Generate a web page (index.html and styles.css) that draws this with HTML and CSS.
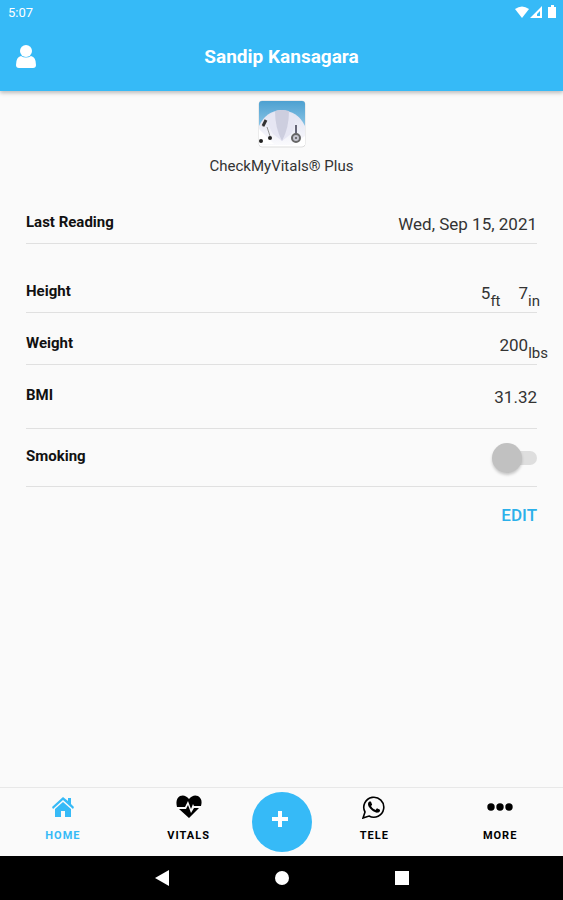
FILE: index.html
```html
<!DOCTYPE html>
<html lang="en">
<head>
    <meta charset="UTF-8">
    <meta name="viewport" content="width=device-width, initial-scale=1.0">
    <title>CheckMyVitals Plus</title>
    <link rel="stylesheet" href="styles.css">
</head>
<body>
    <header class="header">
        <div class="status-bar">
            <span>5:07</span>
            <svg class="status-icons" viewBox="0 0 42 14" width="42" height="14" fill="#fff">
                <path d="M0 4Q7-1 14 4L7 13Z"/>
                <path fill-rule="evenodd" d="M15 13L27 1V13ZM22 11H25V6L22 9Z"/>
                <path d="M36 0h3v2h2v11h-8V2h3z"/>
            </svg>
        </div>
        <div class="toolbar">
            <button class="profile-button" aria-label="Profile">
                <svg viewBox="0 0 20 24" width="20" height="24" fill="#fff">
                    <circle cx="10" cy="6" r="6"/>
                    <path d="M5 11Q10 14 15 11Q20 12 20 20Q20 23 17 23H3Q0 23 0 20Q0 12 5 11Z"/>
                </svg>
            </button>
            <h1>Sandip Kansagara</h1>
        </div>
    </header>

    <main class="content">
        <div class="brand">
            <svg class="logo" viewBox="0 0 48 48" width="48" height="48">
                <defs>
                    <linearGradient id="sky" x1="0" y1="0" x2="0" y2="1">
                        <stop offset="0" stop-color="#4a9fd0"/>
                        <stop offset="1" stop-color="#8cc5e6"/>
                    </linearGradient>
                    <linearGradient id="coat" x1="0" y1="0" x2="0" y2="1">
                        <stop offset="0" stop-color="#dfe1f0"/>
                        <stop offset="1" stop-color="#fafafd"/>
                    </linearGradient>
                    <clipPath id="frame"><rect x="1" y="1" width="46" height="46" rx="3"/></clipPath>
                </defs>
                <rect x="1" y="1" width="46" height="46" rx="3" fill="#fff" stroke="#ddd"/>
                <g clip-path="url(#frame)">
                    <rect width="48" height="27" fill="url(#sky)"/>
                    <path d="M1 26Q8 11 23 10Q40 11 47 26V45H1Z" fill="url(#coat)"/>
                    <path d="M13 14Q8 23 15 34L24 41L33 34Q40 23 34 14Q24 7 13 14Z" fill="#e6e6f3"/>
                    <path d="M17 11Q17 28 24 41Q31 28 31 11Q24 9 17 11Z" fill="#cdcedf"/>
                    <path d="M1 29L16 44H1ZM47 36L34 45H47Z" fill="#fff"/>
                    <path d="M7 21L5 27M9 27L12 36" stroke="#999" fill="none"/>
                    <path d="M8 20L5 26" stroke="#333" stroke-width="3"/>
                    <circle cx="3" cy="41" r="2" fill="#222"/>
                    <circle cx="12" cy="38" r="2" fill="#222"/>
                    <path d="M38 25V36" stroke="#667" stroke-width="2"/>
                    <circle cx="38" cy="38" r="4" fill="#c5c5cf" stroke="#666" stroke-width="2"/>
                    <circle cx="38" cy="38" r="1" fill="#555"/>
                </g>
            </svg>
            <p>CheckMyVitals® Plus</p>
        </div>

        <dl class="readings">
            <div class="row row-date">
                <dt>Last Reading</dt>
                <dd>Wed, Sep 15, 2021</dd>
            </div>
            <div class="row">
                <dt>Height</dt>
                <dd class="height-value"><span>5<sub>ft</sub></span><span>7<sub>in</sub></span></dd>
            </div>
            <div class="row">
                <dt>Weight</dt>
                <dd class="weight-value">200<sub>lbs</sub></dd>
            </div>
            <div class="row row-bmi">
                <dt>BMI</dt>
                <dd>31.32</dd>
            </div>
            <div class="row row-smoking">
                <dt><label for="smoking">Smoking</label></dt>
                <dd><input class="toggle" type="checkbox" id="smoking"></dd>
            </div>
        </dl>
        <div class="actions">
            <button class="edit-button">EDIT</button>
        </div>
    </main>

    <nav class="tabs">
        <a class="tab active" href="#home">
            <svg viewBox="0 0 24 24" width="24" height="24" fill="currentColor">
                <path d="M12 2L1 12L2 14L12 5L22 14L23 12L20 9V3H17V6Z"/>
                <path d="M12 7L4 14V22H10V16H14V22H20V14Z"/>
            </svg>
            HOME
        </a>
        <a class="tab" href="#vitals">
            <svg viewBox="0 0 26 24" width="26" height="24">
                <path d="M13 4Q17-1 22 1Q27 4 25 11H18L17 9L15 14L12 6L9 12H1Q-1 4 4 1Q9-1 13 4Z"/>
                <path d="M3 14H10L12 10L15 18L18 13H23L13 23Z"/>
            </svg>
            VITALS
        </a>
        <button class="add-button" aria-label="Add">
            <svg viewBox="0 0 18 18" width="18" height="18" fill="#fff">
                <path d="M7 1h4v6h6v4h-6v6H7v-6H1V7h6z"/>
            </svg>
        </button>
        <a class="tab" href="#tele">
            <svg viewBox="0 0 24 24" width="24" height="24">
                <path d="M17.47 14.38c-.3-.15-1.76-.87-2.03-.97-.27-.1-.47-.15-.67.15-.2.3-.77.97-.94 1.17-.17.2-.35.22-.65.07-.3-.15-1.25-.46-2.39-1.47-.88-.79-1.48-1.76-1.65-2.06-.17-.3-.02-.46.13-.61.13-.13.3-.35.45-.52.15-.17.2-.3.3-.5.1-.2.05-.37-.03-.52-.07-.15-.67-1.61-.91-2.21-.24-.58-.49-.5-.67-.51h-.57c-.2 0-.52.07-.79.37-.27.3-1.04 1.02-1.04 2.48s1.07 2.88 1.21 3.07c.15.2 2.1 3.2 5.08 4.49 2.98 1.28 2.98.86 3.52.8.54-.05 1.76-.72 2.01-1.41.25-.7.25-1.29.17-1.41-.07-.12-.27-.2-.57-.35z"/>
                <path d="M1 23L3 17A10 10 0 1 1 7 21Z" fill="none" stroke="#000" stroke-width="1.600"/>
            </svg>
            TELE
        </a>
        <a class="tab" href="#more">
            <svg viewBox="0 0 26 24" width="26" height="24">
                <circle cx="4" cy="12" r="3.700"/>
                <circle cx="13" cy="12" r="3.700"/>
                <circle cx="22" cy="12" r="3.700"/>
            </svg>
            MORE
        </a>
    </nav>

    <footer class="system-bar">
        <button aria-label="Back"><svg viewBox="0 0 16 16" width="16" height="16"><path d="M1 8L15 0V16Z"/></svg></button>
        <button aria-label="Home screen"><svg viewBox="0 0 16 16" width="16" height="16"><circle cx="8" cy="8" r="7"/></svg></button>
        <button aria-label="Recent apps"><svg viewBox="0 0 16 16" width="16" height="16"><path d="M1 1H15V15H1Z"/></svg></button>
    </footer>
</body>
</html>
```
FILE: styles.css
```css
* {
  box-sizing: border-box;
}

body {
  margin: 0;
  min-height: 100vh;
  display: flex;
  flex-direction: column;
  background-color: #fafafa;
  color: #333;
  font-family: Roboto, "Liberation Sans", sans-serif;
}

button {
  padding: 0;
  border: none;
  background: none;
  font-family: inherit;
  cursor: pointer;
}

svg {
  display: block;
}

.header {
  background-color: #36baf7;
  color: #fff;
  box-shadow: 0 2px 4px rgba(0, 0, 0, 0.25);
}

.status-bar {
  display: flex;
  justify-content: space-between;
  align-items: center;
  height: 24px;
  padding: 0 6px 0 8px;
  font-size: 13px;
}

.toolbar {
  display: grid;
  grid-template-columns: 20px 1fr 20px;
  align-items: center;
  height: 67px;
  padding: 0 16px 2px;
}

h1 {
  margin: 0;
  font-size: 19px;
  font-weight: 700;
  text-align: center;
}

.content {
  flex: 1;
  padding: 9px 26px;
}

.brand {
  display: flex;
  flex-direction: column;
  align-items: center;
  gap: 8px;
}

.brand p {
  margin: 0;
  font-size: 15px;
  line-height: 20px;
}

.readings {
  margin: 28px 0 0;
}

.row {
  display: flex;
  justify-content: space-between;
  align-items: center;
  height: 52px;
  padding-top: 12px;
  border-bottom: 1px solid #e0e0e0;
}

.row-date {
  height: 40px;
  padding: 0;
  margin-bottom: 17px;
}

.row-bmi {
  height: 64px;
  padding: 0;
}

.row-smoking {
  height: 58px;
  padding: 0;
}

dt {
  padding-bottom: 3px;
  color: #111;
  font-size: 15px;
  font-weight: 700;
}

dd {
  margin: 0;
  font-size: 17px;
}

sub {
  font-size: 15px;
  line-height: 0;
  vertical-align: -7px;
}

.height-value {
  display: flex;
  gap: 18px;
  margin-right: -3px;
}

/* the unit hangs past the end of the row */
.weight-value {
  margin-right: -11px;
}

.toggle {
  appearance: none;
  display: flex;
  align-items: center;
  width: 40px;
  height: 14px;
  margin: 0;
  border-radius: 7px;
  background-color: #dedede;
  cursor: pointer;
}

.toggle::before {
  content: "";
  flex: none;
  width: 30px;
  height: 30px;
  margin-left: -5px;
  border-radius: 50%;
  background-color: #c1c1c1;
  box-shadow: 0 2px 3px rgba(0, 0, 0, 0.2);
}

.toggle:checked {
  justify-content: flex-end;
  background-color: #36baf7;
}

.actions {
  display: flex;
  justify-content: flex-end;
  padding-top: 18px;
}

.edit-button {
  color: #2bb0ea;
  font-size: 17px;
  font-weight: 500;
  line-height: 20px;
}

.tabs {
  display: flex;
  align-items: center;
  height: 69px;
  border-top: 1px solid #e8e8e8;
}

.tab {
  flex: 1;
  display: flex;
  flex-direction: column;
  align-items: center;
  gap: 10px;
  padding-bottom: 6px;
  color: #000;
  font-size: 11px;
  font-weight: 700;
  line-height: 14px;
  letter-spacing: 1px;
  text-decoration: none;
}

.tab.active {
  color: #36baf7;
}

.add-button {
  display: flex;
  justify-content: center;
  align-items: center;
  width: 60px;
  height: 60px;
  padding: 0 4px 6px 0;
  border-radius: 50%;
  background-color: #36baf7;
}

.system-bar {
  display: flex;
  justify-content: center;
  align-items: center;
  gap: 104px;
  height: 44px;
  background-color: #000;
  fill: #fff;
}
```
